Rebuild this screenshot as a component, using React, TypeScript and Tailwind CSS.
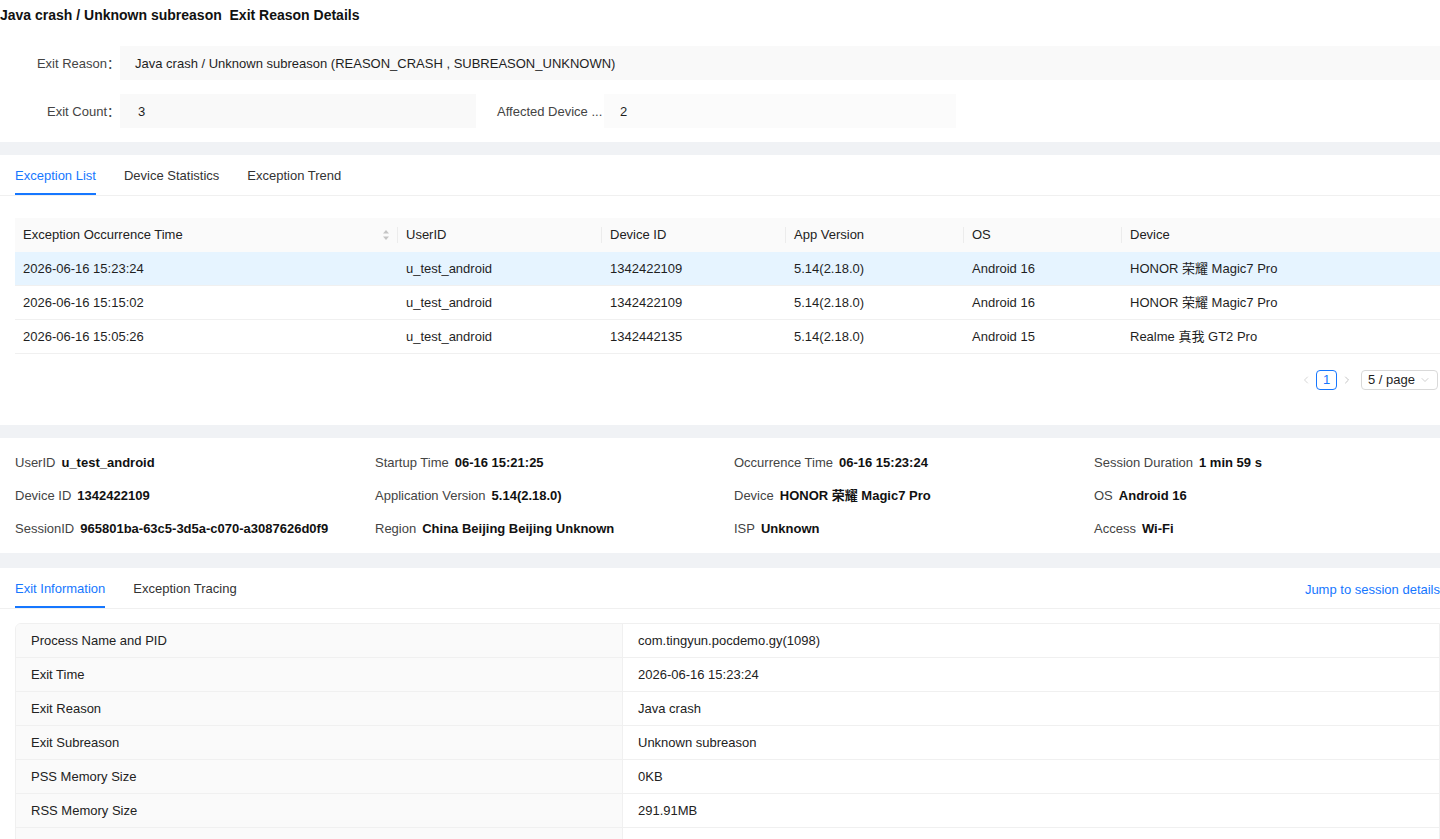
import { ChevronDown, ChevronLeft, ChevronRight } from 'lucide-react'

const FONT = "font-['Liberation_Sans','Noto_Sans_CJK_SC',sans-serif]"

const columns = [
  { title: 'Exception Occurrence Time', width: 'w-[383px]', sortable: true },
  { title: 'UserID', width: 'w-[204px]' },
  { title: 'Device ID', width: 'w-[184px]' },
  { title: 'App Version', width: 'w-[178px]' },
  { title: 'OS', width: 'w-[158px]' },
  { title: 'Device', width: 'flex-1' },
]

const exceptions = [
  ['2026-06-16 15:23:24', 'u_test_android', '1342422109', '5.14(2.18.0)', 'Android 16', 'HONOR 荣耀 Magic7 Pro'],
  ['2026-06-16 15:15:02', 'u_test_android', '1342422109', '5.14(2.18.0)', 'Android 16', 'HONOR 荣耀 Magic7 Pro'],
  ['2026-06-16 15:05:26', 'u_test_android', '1342442135', '5.14(2.18.0)', 'Android 15', 'Realme 真我 GT2 Pro'],
]

const sessionInfo = [
  ['UserID', 'u_test_android'],
  ['Startup Time', '06-16 15:21:25'],
  ['Occurrence Time', '06-16 15:23:24'],
  ['Session Duration', '1 min 59 s'],
  ['Device ID', '1342422109'],
  ['Application Version', '5.14(2.18.0)'],
  ['Device', 'HONOR 荣耀 Magic7 Pro'],
  ['OS', 'Android 16'],
  ['SessionID', '965801ba-63c5-3d5a-c070-a3087626d0f9'],
  ['Region', 'China Beijing Beijing Unknown'],
  ['ISP', 'Unknown'],
  ['Access', 'Wi-Fi'],
]

const exitInfo = [
  ['Process Name and PID', 'com.tingyun.pocdemo.gy(1098)'],
  ['Exit Time', '2026-06-16 15:23:24'],
  ['Exit Reason', 'Java crash'],
  ['Exit Subreason', 'Unknown subreason'],
  ['PSS Memory Size', '0KB'],
  ['RSS Memory Size', '291.91MB'],
  ['', ''],
]

function Tabs({ items, active }: { items: string[]; active: number }) {
  return (
    <div className="flex gap-7 pl-[15px]">
      {items.map((label, i) => (
        <div
          key={label}
          className={
            i === active
              ? 'h-10 flex items-center pt-[3px] border-b-2 border-[#1677ff] text-[#1677ff]'
              : 'h-10 flex items-center pt-[3px] border-b-2 border-transparent text-[#333]'
          }
        >
          {label}
        </div>
      ))}
    </div>
  )
}

function SortIcon() {
  return (
    <svg width="8" height="12" viewBox="0 0 8 12" className="text-[#c4c4c4]">
      <path d="M4 1 L7 4.5 H1 Z" fill="currentColor" />
      <path d="M4 11 L7 7.5 H1 Z" fill="currentColor" />
    </svg>
  )
}

export default function App() {
  return (
    <div className={`${FONT} w-[1440px] min-h-screen bg-[#f0f2f5] text-[13px] text-[#1f1f1f]`}>
      <div className="h-[34px] bg-white flex items-start pt-[5px] text-[14px] font-semibold text-[#111]">
        Java crash / Unknown subreason&nbsp;&nbsp;Exit Reason Details
      </div>

      {/* summary */}
      <div className="bg-white pt-3 pb-[14px]">
        <div className="flex items-center h-[34px]">
          <div className="w-[120px] text-right text-[#444] pt-px">Exit Reason：</div>
          <div className="flex-1 h-full flex items-center pl-[15px] pt-px bg-[#f9f9f9]">
            Java crash / Unknown subreason (REASON_CRASH , SUBREASON_UNKNOWN)
          </div>
        </div>
        <div className="flex items-center h-[34px] mt-[14px]">
          <div className="w-[120px] text-right text-[#444] pt-px">Exit Count：</div>
          <div className="w-[356px] h-full flex items-center pl-[18px] pt-px bg-[#f9f9f9]">3</div>
          <div className="w-[128px] pl-[21px] pt-px text-[#444] whitespace-nowrap">Affected Device ...</div>
          <div className="w-[352px] h-full flex items-center pl-4 pt-px bg-[#fbfbfb]">2</div>
        </div>
      </div>

      {/* exception list */}
      <div className="bg-white mt-[13px] h-[270px]">
        <div className="border-b border-[#f0f0f0]">
          <Tabs items={['Exception List', 'Device Statistics', 'Exception Trend']} active={0} />
        </div>
        <div className="ml-[15px] mt-[22px]">
          <div className="flex h-[34px] bg-[#fafafa] font-medium text-[#222]">
            {columns.map((col, i) => (
              <div key={col.title} className={`${col.width} relative flex items-center px-2`}>
                <span className="flex-1">{col.title}</span>
                {col.sortable && <SortIcon />}
                {i < columns.length - 1 && (
                  <span className="absolute right-0 top-[9px] h-4 w-px bg-[#ececec]" />
                )}
              </div>
            ))}
          </div>
          {exceptions.map((row, r) => (
            <div
              key={r}
              className={
                r === 0
                  ? 'flex h-[34px] border-b border-[#f0f0f0] bg-[#e6f4ff]'
                  : 'flex h-[34px] border-b border-[#f0f0f0]'
              }
            >
              {row.map((cell, i) => (
                <div key={i} className={`${columns[i].width} flex items-center px-2`}>
                  {cell}
                </div>
              ))}
            </div>
          ))}
        </div>
        <div className="flex items-center justify-end mt-[16px] pr-[2px]">
          <ChevronLeft className="w-3 h-3 text-[#c8c8c8]" strokeWidth={1.5} />
          <div className="w-[21px] h-5 ml-1 rounded-[4px] border border-[#1677ff] text-[#1677ff] flex items-center justify-center">
            1
          </div>
          <ChevronRight className="w-3 h-3 ml-1 text-[#b0b0b0]" strokeWidth={1.5} />
          <div className="w-[77px] h-5 ml-2 rounded-[4px] border border-[#d9d9d9] flex items-center px-[6px] gap-1">
            <span className="flex-1">5 / page</span>
            <ChevronDown className="w-3 h-3 text-[#bfbfbf]" strokeWidth={1.5} />
          </div>
        </div>
      </div>

      {/* session info */}
      <div className="bg-white mt-[13px] py-2 pl-[15px]">
        <div className="grid grid-cols-[360px_359px_360px_1fr]">
          {sessionInfo.map(([label, value]) => (
            <div key={label} className="h-[33px] flex items-center pt-px gap-[6px] whitespace-nowrap">
              <span className="text-[#444]">{label}</span>
              <span className="font-semibold text-[#111]">{value}</span>
            </div>
          ))}
        </div>
      </div>

      {/* exit information */}
      <div className="bg-white mt-[15px] pb-6">
        <div className="flex items-center justify-between border-b border-[#f0f0f0]">
          <Tabs items={['Exit Information', 'Exception Tracing']} active={0} />
          <span className="text-[#1677ff] pt-[3px]">Jump to session details</span>
        </div>
        <div className="ml-[15px] mt-[14px] border border-[#f0f0f0] rounded-tl-[6px] overflow-hidden">
          {exitInfo.map(([label, value], i) => (
            <div key={i} className="flex h-[34px] border-b border-[#f0f0f0] last:border-b-0">
              <div className="w-[607px] bg-[#fafafa] border-r border-[#f0f0f0] flex items-center pl-[15px] text-[#222]">
                {label}
              </div>
              <div className="flex-1 flex items-center pl-[15px] text-[#222]">{value}</div>
            </div>
          ))}
        </div>
      </div>
    </div>
  )
}
